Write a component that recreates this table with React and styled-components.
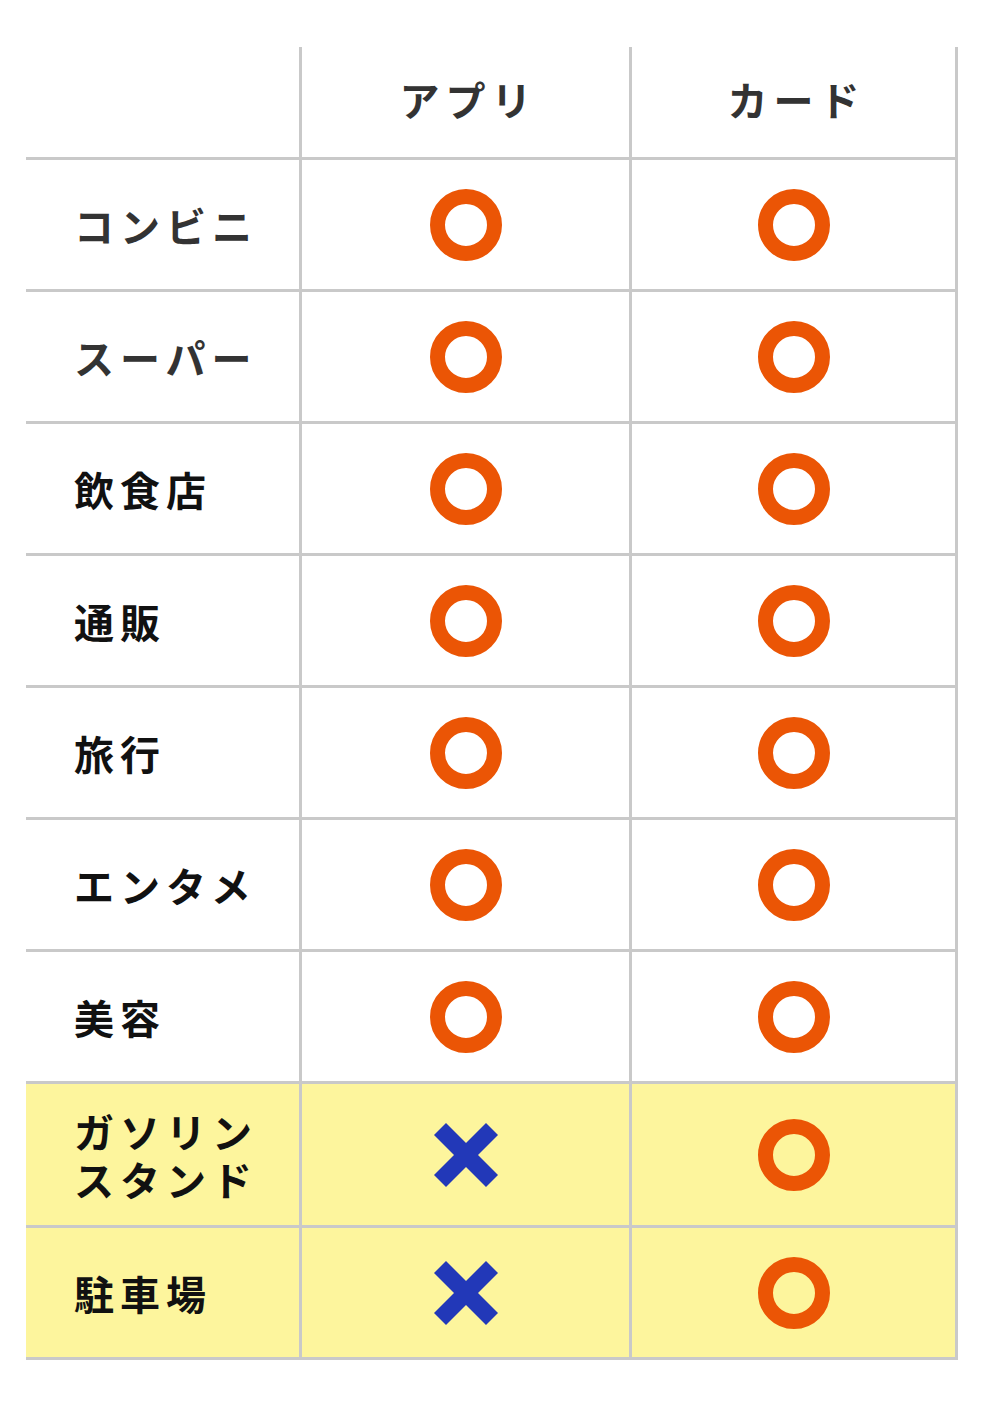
import React from 'react';
import styled, { createGlobalStyle } from 'styled-components';

const GlobalStyle = createGlobalStyle`
  html, body {
    margin: 0;
    padding: 0;
    background: #fff;
  }

  body {
    font-family: "Noto Sans CJK JP", "Noto Sans", sans-serif;
  }
`;

const line = '#c9c9c9';

const Page = styled.div`
  padding: 47px 0 0 26px;
  height: 1360px;
  box-sizing: border-box;
`;

const Table = styled.div`
  display: grid;
  grid-template-columns: 276px 330px 326px;
  width: 932px;
`;

const Cell = styled.div`
  box-sizing: border-box;
  display: flex;
  align-items: center;
  justify-content: ${({ $label }) => ($label ? 'flex-start' : 'center')};
  height: ${({ $h }) => $h}px;
  padding-left: ${({ $label }) => ($label ? '48px' : '0')};
  background: ${({ $hl }) => ($hl ? '#fdf59d' : '#fff')};
  border-right: 3px solid ${line};
  border-bottom: 3px solid ${line};
`;

const HeadText = styled.span`
  font-size: 40px;
  font-weight: 600;
  letter-spacing: 6px;
  padding-left: 6px;
  margin-top: -6px;
  color: #333;
`;

const Label = styled.span`
  font-size: 40px;
  font-weight: 700;
  letter-spacing: 6px;
  line-height: 48px;
  color: ${({ $soft }) => ($soft ? '#333' : '#111')};
`;

const Ring = () => (
  <svg width="72" height="72" viewBox="0 0 72 72">
    <circle cx="36" cy="36" r="28.5" fill="none" stroke="#eb5505" strokeWidth="15" />
  </svg>
);

const Cross = () => (
  <svg width="64" height="64" viewBox="0 0 64 64">
    <g stroke="#2238b8" strokeWidth="17" strokeLinecap="butt">
      <line x1="6" y1="6" x2="58" y2="58" />
      <line x1="58" y1="6" x2="6" y2="58" />
    </g>
  </svg>
);

const rows = [
  { name: 'コンビニ', app: true, card: true, soft: true },
  { name: 'スーパー', app: true, card: true, soft: true },
  { name: '飲食店', app: true, card: true },
  { name: '通販', app: true, card: true },
  { name: '旅行', app: true, card: true },
  { name: 'エンタメ', app: true, card: true },
  { name: '美容', app: true, card: true },
  { name: ['ガソリン', 'スタンド'], app: false, card: true, hl: true, h: 144 },
  { name: '駐車場', app: false, card: true, hl: true },
];

const Mark = ({ ok }) => (ok ? <Ring /> : <Cross />);

export default function App() {
  return (
    <>
      <GlobalStyle />
      <Page>
        <Table>
          <Cell $h={113} />
          <Cell $h={113}>
            <HeadText>アプリ</HeadText>
          </Cell>
          <Cell $h={113}>
            <HeadText>カード</HeadText>
          </Cell>
          {rows.map((r) => {
            const h = r.h || 132;
            const key = Array.isArray(r.name) ? r.name.join('') : r.name;
            return (
              <React.Fragment key={key}>
                <Cell $label $h={h} $hl={r.hl}>
                  <Label $soft={r.soft}>
                    {Array.isArray(r.name)
                      ? r.name.map((n, i) => (
                          <React.Fragment key={n}>
                            {i > 0 && <br />}
                            {n}
                          </React.Fragment>
                        ))
                      : r.name}
                  </Label>
                </Cell>
                <Cell $h={h} $hl={r.hl}>
                  <Mark ok={r.app} />
                </Cell>
                <Cell $h={h} $hl={r.hl}>
                  <Mark ok={r.card} />
                </Cell>
              </React.Fragment>
            );
          })}
        </Table>
      </Page>
    </>
  );
}
